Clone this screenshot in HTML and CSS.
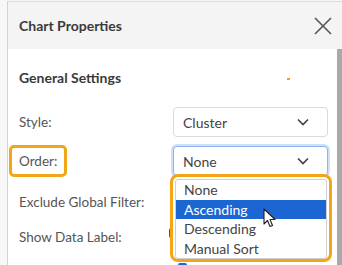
FILE: index.html
```html
<!DOCTYPE html>
<html>
<head>
<meta charset="utf-8">
<link rel="stylesheet" href="styles.css">
</head>
<body>
<div class="screen">
  <div class="gutter"></div>
  <div class="panel">
    <div class="panel-head">
      <span class="title">Chart Properties</span>
      <span class="close">
        <svg width="18" height="18" viewBox="0 0 18 18"><path d="M1 1 L17 17 M17 1 L1 17" stroke="#555" stroke-width="1.6" fill="none"/></svg>
      </span>
    </div>
    <div class="panel-body">
      <div class="content">
        <div class="section-title"><span>General Settings</span><span class="mark"></span></div>
        <div class="row row-style">
          <span class="label">Style:</span>
          <div class="select">
            <span>Cluster</span>
            <svg class="chev" width="12" height="8" viewBox="0 0 12 8"><path d="M1 1.5 L6 6.5 L11 1.5" stroke="#444" stroke-width="1.7" fill="none"/></svg>
          </div>
        </div>
        <div class="row row-order">
          <span class="label"><span class="hl">Order:</span></span>
          <div class="select-wrap">
            <div class="select focus">
              <span>None</span>
              <svg class="chev" width="12" height="8" viewBox="0 0 12 8"><path d="M1 1.5 L6 6.5 L11 1.5" stroke="#444" stroke-width="1.7" fill="none"/></svg>
            </div>
            <div class="dropdown">
              <ul class="options">
                <li>None</li>
                <li class="active">Ascending</li>
                <li>Descending</li>
                <li>Manual Sort</li>
              </ul>
            </div>
            <svg class="cursor" width="14" height="21" viewBox="0 0 14 21"><path d="M1 1 L1 16 L4.5 12.5 L7 18.5 L9.5 17.5 L7 11.5 L12 11.5 Z" fill="#fff" stroke="#222" stroke-width="1.1" stroke-linejoin="round"/></svg>
          </div>
        </div>
        <div class="row row-exclude">
          <span class="label">Exclude Global Filter:</span>
          <span></span>
        </div>
        <div class="row row-show">
          <span class="label">Show Data Label:</span>
          <span class="toggle"></span>
        </div>
        <div class="row row-next">
          <span></span>
          <span class="check"></span>
        </div>
      </div>
      <div class="scrollbar"></div>
    </div>
  </div>
</div>
</body>
</html>
```

FILE: styles.css
```css
* { box-sizing: border-box; }
html, body { margin: 0; padding: 0; }
body {
  width: 342px;
  height: 265px;
  overflow: hidden;
  background: #f6f6f6;
  font-family: Lato, "Open Sans", sans-serif;
}
.screen {
  display: flex;
  height: 265px;
  padding-top: 1px;
}
.gutter {
  width: 7px;
  background: #f7f7f7;
}
.panel {
  flex: 1;
  display: flex;
  flex-direction: column;
  border-left: 1px solid #d4d4d4;
  border-top: 1px solid #dcdcdc;
  background: #fff;
}
.panel-head {
  height: 47px;
  background: #f4f4f4;
  display: flex;
  align-items: center;
  justify-content: space-between;
  padding: 0 10px 0 11px;
}
.title {
  font-weight: 700;
  font-size: 14px;
  color: #3a3a3a;
}
.close {
  display: flex;
  width: 18px;
  height: 18px;
  margin-top: 1px;
}
.panel-body {
  flex: 1;
  display: flex;
  overflow: hidden;
}
.content {
  flex: 1;
  padding: 20px 0 0 11px;
  display: flex;
  flex-direction: column;
}
.scrollbar {
  width: 5px;
  background: #a9a9a9;
}
.section-title {
  display: flex;
  align-items: center;
  height: 16px;
  font-weight: 700;
  font-size: 14px;
  color: #3a3a3a;
}
.mark {
  width: 3px;
  height: 2px;
  background: #f0a30c;
  margin-left: auto;
  margin-right: 47px;
  margin-top: 4px;
}
.row {
  display: grid;
  grid-template-columns: 154px 155px;
  align-items: center;
  height: 30px;
  flex-shrink: 0;
}
.label {
  font-size: 13.5px;
  color: #555;
}
.row-style { margin-top: 22px; }
.row-order { margin-top: 8px; }
.row-exclude { margin-top: 12px; }
.row-show { margin-top: 5px; }
.row-next { margin-top: 10px; }
.hl {
  display: inline-block;
  margin-left: -10px;
  padding: 5px 7px 5px 7px;
  border: 3px solid #f2a516;
  border-radius: 5px;
  line-height: 16px;
}
.select {
  height: 30px;
  border: 1px solid #dadada;
  border-radius: 4px;
  display: flex;
  align-items: center;
  justify-content: space-between;
  padding: 0 18px 0 9px;
  font-size: 14px;
  color: #444;
  background: #fff;
}
.select.focus {
  border-color: #8db4ec;
  box-shadow: 0 0 0 2px #cfe0fa;
}
.select-wrap {
  position: relative;
}
.dropdown {
  position: absolute;
  left: -3px;
  top: 28px;
  width: 162px;
  height: 88px;
  border: 3px solid #f2a516;
  border-radius: 8px;
  background: #fff;
  padding: 2px 2px;
  z-index: 2;
}
.options {
  list-style: none;
  margin: 0;
  padding: 0;
  border: 1px solid #cfcfcf;
  border-radius: 3px;
  height: 80px;
}
.options li {
  height: 19.5px;
  line-height: 19.5px;
  padding-left: 8px;
  font-size: 14px;
  color: #444;
}
.options li.active {
  background: #1b66d2;
  color: #fff;
}
.cursor {
  position: absolute;
  left: 90px;
  top: 62px;
  z-index: 3;
}
.toggle {
  width: 6px;
  height: 10px;
  background: #555;
  border-radius: 2px;
  margin-left: -4px;
  margin-top: -8px;
}
.check {
  width: 9px;
  height: 9px;
  background: #1b66d2;
  border-radius: 2px;
  margin-left: 5px;
  align-self: start;
  margin-top: 1px;
}
```
